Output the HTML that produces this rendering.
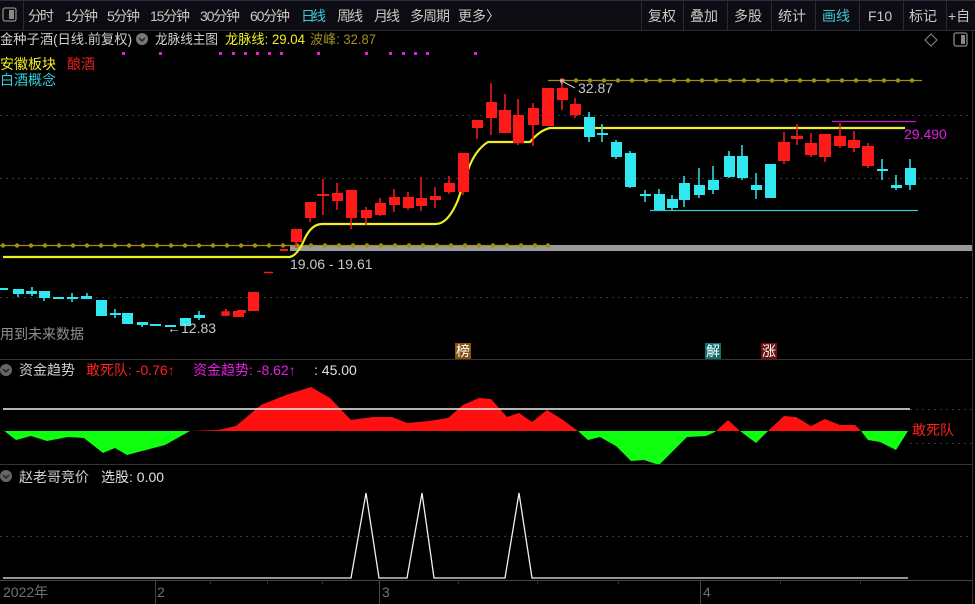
<!DOCTYPE html>
<html><head><meta charset="utf-8"><style>
html,body{margin:0;padding:0;background:#000;width:975px;height:604px;overflow:hidden}
body{font-family:"Liberation Sans","Noto Sans CJK SC",sans-serif;position:relative}
</style></head><body>
<svg width="975" height="604" style="position:absolute;left:0;top:0" font-family="Liberation Sans, Noto Sans CJK SC, sans-serif">
<rect x="0" y="0" width="975" height="30" fill="#0c0c12"/>
<line x1="0" y1="30.5" x2="975" y2="30.5" stroke="#2a2a32"/>
<line x1="0" y1="0.5" x2="975" y2="0.5" stroke="#2a2a40"/>
<line x1="23.5" y1="0" x2="23.5" y2="30" stroke="#2a2a32"/>
<rect x="3" y="8" width="13" height="13" rx="2" fill="none" stroke="#888" stroke-width="1.3"/><rect x="9" y="10" width="5" height="9" fill="#888"/>
<g stroke="#2a2a32"><line x1="641.5" y1="0" x2="641.5" y2="30"/><line x1="683.5" y1="0" x2="683.5" y2="30"/><line x1="727.5" y1="0" x2="727.5" y2="30"/><line x1="771.5" y1="0" x2="771.5" y2="30"/><line x1="815.5" y1="0" x2="815.5" y2="30"/><line x1="859.5" y1="0" x2="859.5" y2="30"/><line x1="903.5" y1="0" x2="903.5" y2="30"/><line x1="946.5" y1="0" x2="946.5" y2="30"/></g>
<g font-size="14" fill="#c8c8c8">
<text x="28" y="21" textLength="26">分时</text><text x="65" y="21" textLength="33">1分钟</text><text x="107" y="21" textLength="33">5分钟</text><text x="150" y="21" textLength="40">15分钟</text><text x="200" y="21" textLength="40">30分钟</text><text x="250" y="21" textLength="40">60分钟</text>
<text x="301" y="21" fill="#3cc8d8" textLength="25">日线</text><text x="337" y="21" textLength="26">周线</text><text x="374" y="21" textLength="26">月线</text><text x="410" y="21" textLength="40">多周期</text><text x="458" y="21">更多〉</text>
<text x="648" y="21">复权</text><text x="690" y="21">叠加</text><text x="734" y="21">多股</text><text x="778" y="21">统计</text><text x="822" y="21" fill="#3cc8d8">画线</text><text x="868" y="21">F10</text><text x="909" y="21">标记</text><text x="948" y="21">+自</text>
</g>
<!-- title -->
<g font-size="13.5">
<text x="0" y="44" fill="#d0d0d0" textLength="132" lengthAdjust="spacingAndGlyphs">金种子酒(日线.前复权)</text>
<circle cx="142" cy="39" r="6" fill="#777"/><path d="M139 38l3 3 3-3" stroke="#222" fill="none" stroke-width="1.5"/>
<text x="155" y="44" fill="#d0d0d0" textLength="63" lengthAdjust="spacingAndGlyphs">龙脉线主图</text>
<text x="225" y="44" fill="#f0f020" textLength="80" lengthAdjust="spacingAndGlyphs">龙脉线: 29.04</text>
<text x="310" y="44" fill="#a09020" textLength="66" lengthAdjust="spacingAndGlyphs">波峰: 32.87</text>
<text x="0" y="69" fill="#f0f020" font-size="14">安徽板块</text><text x="67" y="69" fill="#e02020" font-size="14">酿酒</text>
<text x="0" y="85" fill="#30d0d8" font-size="14">白酒概念</text>
</g>
<path d="M931 34l6 6-6 6-6-6z" fill="none" stroke="#888"/>
<rect x="954" y="33" width="13" height="13" rx="2" fill="none" stroke="#888" stroke-width="1.3"/><rect x="961" y="35" width="4" height="9" fill="#888"/>
<line x1="972.5" y1="30" x2="972.5" y2="604" stroke="#333"/>
<g fill="#e020e0"><rect x="122" y="52" width="3" height="3"/><rect x="159" y="52" width="3" height="3"/><rect x="219" y="52" width="3" height="3"/><rect x="232" y="52" width="3" height="3"/><rect x="244" y="52" width="3" height="3"/><rect x="256" y="52" width="3" height="3"/><rect x="268" y="52" width="3" height="3"/><rect x="280" y="52" width="3" height="3"/><rect x="317" y="52" width="3" height="3"/><rect x="365" y="52" width="3" height="3"/><rect x="389" y="52" width="3" height="3"/><rect x="402" y="52" width="3" height="3"/><rect x="414" y="52" width="3" height="3"/><rect x="426" y="52" width="3" height="3"/><rect x="474" y="52" width="3" height="3"/></g>
<g stroke="#3a3a3a" stroke-dasharray="2,4"><line x1="0" y1="115.5" x2="972" y2="115.5"/><line x1="0" y1="178.5" x2="972" y2="178.5"/><line x1="0" y1="297.5" x2="972" y2="297.5"/><line x1="910" y1="443.5" x2="972" y2="443.5"/><line x1="0" y1="536.5" x2="972" y2="536.5"/></g>
<rect x="290" y="245" width="682" height="6" fill="#9a9a9a"/>
<line x1="0" y1="245.5" x2="550" y2="245.5" stroke="#a09010" stroke-width="1.2"/>
<g fill="#a09010">
<circle cx="3" cy="245.5" r="2.2"/><circle cx="17" cy="245.5" r="2.2"/><circle cx="31" cy="245.5" r="2.2"/><circle cx="45" cy="245.5" r="2.2"/><circle cx="59" cy="245.5" r="2.2"/><circle cx="73" cy="245.5" r="2.2"/><circle cx="87" cy="245.5" r="2.2"/><circle cx="101" cy="245.5" r="2.2"/><circle cx="115" cy="245.5" r="2.2"/><circle cx="129" cy="245.5" r="2.2"/><circle cx="143" cy="245.5" r="2.2"/><circle cx="157" cy="245.5" r="2.2"/><circle cx="171" cy="245.5" r="2.2"/><circle cx="185" cy="245.5" r="2.2"/><circle cx="199" cy="245.5" r="2.2"/><circle cx="213" cy="245.5" r="2.2"/><circle cx="227" cy="245.5" r="2.2"/><circle cx="241" cy="245.5" r="2.2"/><circle cx="255" cy="245.5" r="2.2"/><circle cx="269" cy="245.5" r="2.2"/><circle cx="283" cy="245.5" r="2.2"/><circle cx="297" cy="245.5" r="2.2"/><circle cx="311" cy="245.5" r="2.2"/><circle cx="325" cy="245.5" r="2.2"/><circle cx="339" cy="245.5" r="2.2"/><circle cx="353" cy="245.5" r="2.2"/><circle cx="367" cy="245.5" r="2.2"/><circle cx="381" cy="245.5" r="2.2"/><circle cx="395" cy="245.5" r="2.2"/><circle cx="409" cy="245.5" r="2.2"/><circle cx="423" cy="245.5" r="2.2"/><circle cx="437" cy="245.5" r="2.2"/><circle cx="451" cy="245.5" r="2.2"/><circle cx="465" cy="245.5" r="2.2"/><circle cx="479" cy="245.5" r="2.2"/><circle cx="493" cy="245.5" r="2.2"/><circle cx="507" cy="245.5" r="2.2"/><circle cx="521" cy="245.5" r="2.2"/><circle cx="535" cy="245.5" r="2.2"/><circle cx="548" cy="245.5" r="2.2"/>
</g>
<line x1="548" y1="80.5" x2="922" y2="80.5" stroke="#a09010" stroke-width="1.2"/>
<g fill="#a09010"><circle cx="562" cy="80.5" r="2.2"/><circle cx="576" cy="80.5" r="2.2"/><circle cx="590" cy="80.5" r="2.2"/><circle cx="604" cy="80.5" r="2.2"/><circle cx="618" cy="80.5" r="2.2"/><circle cx="632" cy="80.5" r="2.2"/><circle cx="646" cy="80.5" r="2.2"/><circle cx="660" cy="80.5" r="2.2"/><circle cx="674" cy="80.5" r="2.2"/><circle cx="688" cy="80.5" r="2.2"/><circle cx="702" cy="80.5" r="2.2"/><circle cx="716" cy="80.5" r="2.2"/><circle cx="730" cy="80.5" r="2.2"/><circle cx="744" cy="80.5" r="2.2"/><circle cx="758" cy="80.5" r="2.2"/><circle cx="772" cy="80.5" r="2.2"/><circle cx="786" cy="80.5" r="2.2"/><circle cx="800" cy="80.5" r="2.2"/><circle cx="814" cy="80.5" r="2.2"/><circle cx="828" cy="80.5" r="2.2"/><circle cx="842" cy="80.5" r="2.2"/><circle cx="856" cy="80.5" r="2.2"/><circle cx="870" cy="80.5" r="2.2"/><circle cx="884" cy="80.5" r="2.2"/><circle cx="898" cy="80.5" r="2.2"/><circle cx="912" cy="80.5" r="2.2"/></g>
<path d="M3 257 L290 257 Q298 255 305 238 Q312 224 322 224 L436 224 Q448 224 458 200 L468 170 Q475 150 488 142 L530 142 Q540 130 550 128 L905 128" fill="none" stroke="#f0f020" stroke-width="2.2"/>
<line x1="650" y1="210.5" x2="918" y2="210.5" stroke="#30c8d0" stroke-width="1.3"/>
<line x1="832" y1="121.5" x2="916" y2="121.5" stroke="#c020c0" stroke-width="1.3"/>
<g fill="#ff1a1a" stroke="#ff1a1a" stroke-width="1.5">
<line x1="226" y1="309" x2="226" y2="316"/><rect x="222" y="312" width="7" height="3"/>
<rect x="233" y="311" width="11" height="6" stroke="none"/>
<rect x="237" y="310" width="9" height="3" stroke="none"/>
<rect x="248" y="292" width="11" height="19" stroke="none"/>
<line x1="264" y1="272.5" x2="273" y2="272.5" stroke-width="1.5"/>
<rect x="280" y="249" width="8" height="2" stroke="none"/>
<line x1="296" y1="229" x2="296" y2="248"/><rect x="291" y="229" width="11" height="13" stroke="none"/>
<line x1="310" y1="202" x2="310" y2="222"/><rect x="305" y="202" width="11" height="16" stroke="none"/>
<line x1="323" y1="179" x2="323" y2="215"/><rect x="317" y="194" width="12" height="2" stroke="none"/>
<line x1="337" y1="183" x2="337" y2="210"/><rect x="332" y="193" width="11" height="8" stroke="none"/>
<line x1="351" y1="190" x2="351" y2="229"/><rect x="346" y="190" width="11" height="28" stroke="none"/>
<line x1="366" y1="207" x2="366" y2="225"/><rect x="361" y="210" width="11" height="8" stroke="none"/>
<line x1="380" y1="198" x2="380" y2="216"/><rect x="375" y="203" width="11" height="12" stroke="none"/>
<line x1="394" y1="189" x2="394" y2="212"/><rect x="389" y="197" width="11" height="8" stroke="none"/>
<line x1="408" y1="192" x2="408" y2="210"/><rect x="403" y="197" width="11" height="11" stroke="none"/>
<line x1="421" y1="177" x2="421" y2="211"/><rect x="416" y="198" width="11" height="8" stroke="none"/>
<line x1="435" y1="187" x2="435" y2="208"/><rect x="430" y="196" width="11" height="4" stroke="none"/>
<line x1="449" y1="176" x2="449" y2="194"/><rect x="444" y="183" width="11" height="9" stroke="none"/>
<line x1="463" y1="153" x2="463" y2="195"/><rect x="458" y="153" width="11" height="39" stroke="none"/>
<line x1="477" y1="120" x2="477" y2="139"/><rect x="472" y="120" width="11" height="8" stroke="none"/>
<line x1="491" y1="83" x2="491" y2="135"/><rect x="486" y="102" width="11" height="16" stroke="none"/>
<line x1="505" y1="94" x2="505" y2="133"/><rect x="499" y="110" width="12" height="23" stroke="none"/>
<line x1="518" y1="99" x2="518" y2="145"/><rect x="513" y="115" width="11" height="28" stroke="none"/>
<line x1="533" y1="103" x2="533" y2="146"/><rect x="528" y="108" width="11" height="17" stroke="none"/>
<rect x="542" y="88" width="12" height="38" stroke="none"/>
<line x1="562" y1="78" x2="562" y2="110"/><rect x="557" y="88" width="11" height="12" stroke="none"/>
<line x1="575" y1="98" x2="575" y2="118"/><rect x="570" y="104" width="11" height="11" stroke="none"/>
<line x1="784" y1="132" x2="784" y2="164"/><rect x="778" y="142" width="12" height="19" stroke="none"/>
<line x1="797" y1="124" x2="797" y2="145"/><rect x="791" y="136" width="12" height="3" stroke="none"/>
<line x1="811" y1="133" x2="811" y2="157"/><rect x="805" y="143" width="12" height="12" stroke="none"/>
<line x1="825" y1="134" x2="825" y2="162"/><rect x="819" y="134" width="12" height="23" stroke="none"/>
<line x1="840" y1="123" x2="840" y2="148"/><rect x="834" y="136" width="12" height="10" stroke="none"/>
<line x1="854" y1="131" x2="854" y2="152"/><rect x="848" y="140" width="12" height="8" stroke="none"/>
<line x1="868" y1="143" x2="868" y2="168"/><rect x="862" y="146" width="12" height="20" stroke="none"/>
</g>
<g fill="#30e8f0" stroke="#30e8f0" stroke-width="1.5">
<rect x="0" y="288" width="8" height="2" stroke="none"/>
<rect x="13" y="289" width="11" height="5" stroke="none"/><line x1="18" y1="289" x2="18" y2="297"/>
<rect x="26" y="291" width="11" height="3" stroke="none"/><line x1="32" y1="287" x2="32" y2="296"/>
<rect x="39" y="291" width="11" height="7" stroke="none"/><line x1="44" y1="291" x2="44" y2="301"/>
<rect x="53" y="297" width="11" height="2" stroke="none"/>
<rect x="67" y="297" width="11" height="2" stroke="none"/><line x1="72" y1="293" x2="72" y2="302"/>
<rect x="81" y="296" width="11" height="3" stroke="none"/><line x1="87" y1="293" x2="87" y2="299"/>
<rect x="96" y="300" width="11" height="16" stroke="none"/>
<rect x="110" y="313" width="11" height="2" stroke="none"/><line x1="115" y1="309" x2="115" y2="318"/>
<rect x="122" y="313" width="11" height="11" stroke="none"/>
<rect x="137" y="322" width="11" height="3" stroke="none"/><line x1="142" y1="322" x2="142" y2="327"/>
<rect x="150" y="324" width="11" height="2" stroke="none"/>
<rect x="165" y="325" width="11" height="2" stroke="none"/>
<rect x="180" y="318" width="11" height="8" stroke="none"/>
<rect x="194" y="315" width="11" height="3" stroke="none"/><line x1="199" y1="311" x2="199" y2="320"/>
<line x1="589" y1="112" x2="589" y2="142"/><rect x="584" y="117" width="11" height="20" stroke="none"/>
<line x1="602" y1="124" x2="602" y2="142"/><rect x="597" y="133" width="11" height="2" stroke="none"/>
<line x1="616" y1="140" x2="616" y2="159"/><rect x="611" y="142" width="11" height="15" stroke="none"/>
<line x1="630" y1="151" x2="630" y2="188"/><rect x="625" y="153" width="11" height="34" stroke="none"/>
<line x1="645" y1="190" x2="645" y2="202"/><rect x="640" y="194" width="11" height="2" stroke="none"/>
<line x1="659" y1="189" x2="659" y2="211"/><rect x="654" y="194" width="11" height="16" stroke="none"/>
<line x1="672" y1="195" x2="672" y2="210"/><rect x="667" y="199" width="11" height="9" stroke="none"/>
<line x1="684" y1="176" x2="684" y2="207"/><rect x="679" y="183" width="11" height="17" stroke="none"/>
<line x1="699" y1="168" x2="699" y2="198"/><rect x="694" y="185" width="11" height="10" stroke="none"/>
<line x1="713" y1="166" x2="713" y2="194"/><rect x="708" y="180" width="11" height="10" stroke="none"/>
<line x1="729" y1="151" x2="729" y2="178"/><rect x="724" y="156" width="11" height="21" stroke="none"/>
<line x1="742" y1="145" x2="742" y2="180"/><rect x="737" y="156" width="11" height="22" stroke="none"/>
<line x1="756" y1="173" x2="756" y2="199"/><rect x="751" y="185" width="11" height="5" stroke="none"/>
<line x1="770" y1="164" x2="770" y2="198"/><rect x="765" y="164" width="11" height="34" stroke="none"/>
<line x1="882" y1="159" x2="882" y2="180"/><rect x="877" y="169" width="11" height="2" stroke="none"/>
<line x1="896" y1="175" x2="896" y2="190"/><rect x="891" y="185" width="11" height="3" stroke="none"/>
<line x1="910" y1="159" x2="910" y2="190"/><rect x="905" y="168" width="11" height="17" stroke="none"/>
</g>
<g font-size="14">
<text x="290" y="269" fill="#c8c8c8">19.06 - 19.61</text>
<text x="578" y="93" fill="#c8c8c8">32.87</text>
<path d="M575 88 L560 80 M560 80 l5 0 M560 80 l2 4" stroke="#c8c8c8" fill="none"/>
<text x="167" y="333" fill="#c8c8c8">←12.83</text>
<text x="904" y="139" fill="#e020e0">29.490</text>
<text x="0" y="339" fill="#909090">用到未来数据</text>
</g>
<rect x="455" y="343" width="16" height="16" fill="#8a5010"/><text x="456" y="356" font-size="14" fill="#fff">榜</text>
<rect x="705" y="343" width="16" height="16" fill="#107070"/><text x="706" y="356" font-size="14" fill="#fff">解</text>
<rect x="761" y="343" width="16" height="16" fill="#701010"/><text x="762" y="356" font-size="14" fill="#fff">涨</text>
<line x1="0" y1="359.5" x2="972" y2="359.5" stroke="#333"/>
<circle cx="6" cy="370" r="6" fill="#666"/><path d="M3 369l3 3 3-3" stroke="#222" fill="none" stroke-width="1.5"/>
<g font-size="14"><text x="19" y="375" fill="#d0d0d0">资金趋势</text><text x="86" y="375" fill="#ff2020">敢死队: -0.76↑</text><text x="193" y="375" fill="#e020e0">资金趋势: -8.62↑</text><text x="314" y="375" fill="#e0e0e0">: 45.00</text>
<text x="912" y="435" fill="#ff2020">敢死队</text></g>
<defs>
<clipPath id="up"><rect x="0" y="300" width="975" height="131"/></clipPath>
<clipPath id="dn"><rect x="0" y="431" width="975" height="40"/></clipPath>
<polygon id="wave" points="3,431 3,430 16,440 31,436 47,441 68,437 84,438 103,453 115,448 127,455 165,445 190,431 218,430 236,426 261,405 286,395 311,387 330,398 351,420 373,417 392,417 407,423 429,421 448,418 463,405 479,398 491,399 507,417 519,413 532,422 547,410 563,420 578,431 588,440 600,437 616,446 631,461 644,460 659,465 687,437 706,436 715,432 728,420 740,431 756,443 768,431 784,416 796,417 811,426 825,419 840,425 855,425 861,431 868,440 880,442 896,450 908,431 908,431"/>
</defs>
<g fill="#ff1010" clip-path="url(#up)"><use href="#wave"/></g>
<g fill="#10ff10" clip-path="url(#dn)"><use href="#wave"/></g>
<line x1="3" y1="409" x2="910" y2="409" stroke="#f0f0f0" stroke-width="1.5"/>
<line x1="910" y1="409.5" x2="972" y2="409.5" stroke="#3a3a3a" stroke-dasharray="2,4"/>
<line x1="0" y1="464.5" x2="972" y2="464.5" stroke="#333"/>
<circle cx="6" cy="476" r="6" fill="#666"/><path d="M3 475l3 3 3-3" stroke="#222" fill="none" stroke-width="1.5"/>
<g font-size="14"><text x="19" y="482" fill="#d0d0d0">赵老哥竞价</text><text x="101" y="482" fill="#e0e0e0">选股: 0.00</text></g>
<polyline points="3,578 351,578 366,493 379,578 407,578 422,493 434,578 505,578 519,493 532,578 908,578" fill="none" stroke="#f0f0f0" stroke-width="1.3"/>
<line x1="0" y1="580.5" x2="972" y2="580.5" stroke="#444"/>
<g stroke="#444"><line x1="155.5" y1="580" x2="155.5" y2="604"/><line x1="379.5" y1="580" x2="379.5" y2="604"/><line x1="700.5" y1="580" x2="700.5" y2="604"/></g>
<g stroke="#333"><line x1="210.5" y1="580" x2="210.5" y2="584"/><line x1="267.5" y1="580" x2="267.5" y2="584"/><line x1="322.5" y1="580" x2="322.5" y2="584"/><line x1="458.5" y1="580" x2="458.5" y2="584"/><line x1="537.5" y1="580" x2="537.5" y2="584"/><line x1="618.5" y1="580" x2="618.5" y2="584"/><line x1="780.5" y1="580" x2="780.5" y2="584"/><line x1="860.5" y1="580" x2="860.5" y2="584"/></g>
<g font-size="14" fill="#707070"><text x="3" y="597">2022年</text><text x="157" y="597">2</text><text x="382" y="597">3</text><text x="703" y="597">4</text></g>
</svg>
</body></html>
